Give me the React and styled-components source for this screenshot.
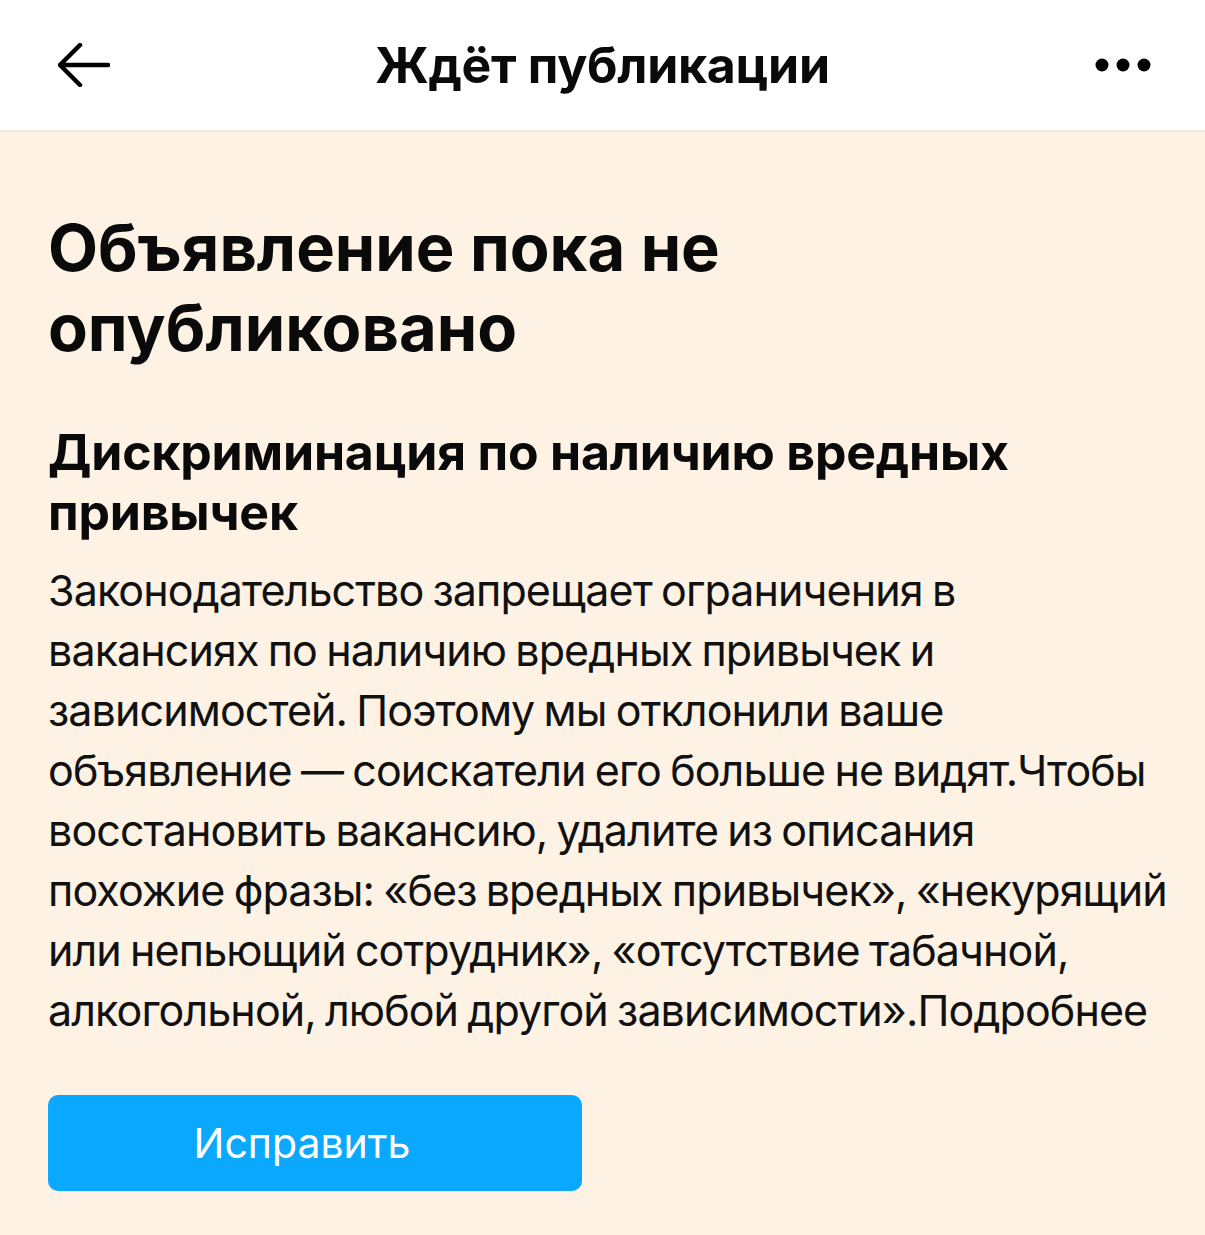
import React from "react";
import styled, { createGlobalStyle } from "styled-components";

const Global = createGlobalStyle`
  html, body { margin: 0; padding: 0; background: #fdf2e3; }
  body { font-family: Inter, Roboto, "Noto Sans", sans-serif; color: #0a0a0a; }
`;

const Page = styled.div`
  width: 1205px;
  min-height: 1235px;
  background: #fdf2e3;
`;

const Header = styled.header`
  height: 132px;
  background: #fff;
  border-bottom: 2px solid #f1e9df;
  box-sizing: border-box;
  display: grid;
  grid-template-columns: 140px 1fr 140px;
  align-items: center;
`;

const IconButton = styled.button`
  border: 0;
  background: none;
  padding: 0;
  height: 60px;
  display: flex;
  align-items: center;
  justify-content: ${(p) => (p.$end ? "flex-end" : "flex-start")};
  padding-left: ${(p) => (p.$end ? "0" : "58px")};
  padding-right: ${(p) => (p.$end ? "54px" : "0")};
`;

const HeaderTitle = styled.h1`
  margin: 0;
  text-align: center;
  font-size: 50px;
  font-weight: 700;
  letter-spacing: -0.3px;
`;

const Content = styled.main`
  padding: 76px 0 0 48px;
`;

const Title = styled.h2`
  margin: 0;
  font-size: 65px;
  line-height: 80px;
  font-weight: 700;
  white-space: nowrap;
`;

const Subtitle = styled.h3`
  margin: 54px 0 0;
  font-size: 50px;
  line-height: 60px;
  font-weight: 700;
  letter-spacing: -0.2px;
  white-space: nowrap;
`;

const Body = styled.p`
  margin: 18px 0 0;
  font-size: 43px;
  line-height: 60px;
  font-weight: 400;
  letter-spacing: -0.9px;
  word-spacing: -2px;
  color: #111;
  white-space: nowrap;
`;

const Button = styled.button`
  margin-top: 55px;
  width: 534px;
  height: 96px;
  border: 0;
  border-radius: 10px;
  background: #0ba8ff;
  color: #fff;
  font-family: Inter, Roboto, "Noto Sans", sans-serif;
  font-size: 41px;
  font-weight: 400;
  display: flex;
  align-items: center;
  justify-content: center;
  padding: 0 26px 0 0;
`;

function BackArrow() {
  return (
    <svg width="52" height="44" viewBox="0 0 52 44" fill="none">
      <path d="M2 22h48M22 2L2 22l20 20" stroke="#000" strokeWidth="4.5" strokeLinecap="round" strokeLinejoin="round" />
    </svg>
  );
}

function Dots() {
  return (
    <svg width="56" height="14" viewBox="0 0 56 14">
      <circle cx="7" cy="7" r="6.5" fill="#000" />
      <circle cx="28" cy="7" r="6.5" fill="#000" />
      <circle cx="49" cy="7" r="6.5" fill="#000" />
    </svg>
  );
}

export default function App() {
  return (
    <Page>
      <Global />
      <Header>
        <IconButton aria-label="Назад"><BackArrow /></IconButton>
        <HeaderTitle>Ждёт публикации</HeaderTitle>
        <IconButton $end aria-label="Ещё"><Dots /></IconButton>
      </Header>
      <Content>
        <Title>Объявление пока не<br />опубликовано</Title>
        <Subtitle>Дискриминация по наличию вредных<br />привычек</Subtitle>
        <Body>
          Законодательство запрещает ограничения в<br />
          вакансиях по наличию вредных привычек и<br />
          зависимостей. Поэтому мы отклонили ваше<br />
          объявление — соискатели его больше не видят.Чтобы<br />
          восстановить вакансию, удалите из описания<br />
          похожие фразы: «без вредных привычек», «некурящий<br />
          или непьющий сотрудник», «отсутствие табачной,<br />
          алкогольной, любой другой зависимости».Подробнее
        </Body>
        <Button>Исправить</Button>
      </Content>
    </Page>
  );
}
